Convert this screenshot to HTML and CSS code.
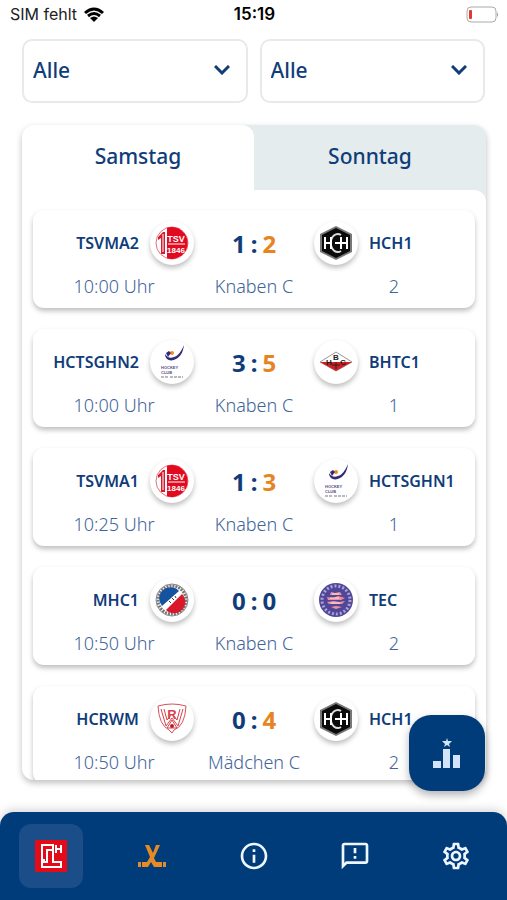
FILE: index.html
```html
<!DOCTYPE html>
<html lang="de">
<head>
    <meta charset="utf-8">
    <meta name="viewport" content="width=device-width, initial-scale=1">
    <title>Spielplan</title>
    <link rel="stylesheet" href="styles.css">
</head>
<body>
    <!-- Club logos, used by the match cards -->
    <svg class="sprite" aria-hidden="true">
        <symbol id="tsv" viewBox="0 0 34 34">
            <circle cx="17" cy="17" r="16" fill="#fff" stroke="#e5707a" stroke-width="1"/>
            <path d="M12 1.700A16 16 0 1 1 12 32.300z" fill="#e20a20"/>
            <path d="M3 11l5-5h2v22H6V12l-3 2z" fill="#d51b2c"/>
            <path d="M8 8v18" stroke="#fff" stroke-width="1"/>
            <text x="21" y="16" class="logo-text" font-size="9" fill="#fff">TSV</text>
            <path d="M13 18h17" stroke="#fff" stroke-width="1"/>
            <text x="21" y="27" class="logo-text" font-size="8" fill="#fff">1846</text>
        </symbol>
        <symbol id="hch" viewBox="0 0 34 34">
            <path d="M17 0l16 8v18l-16 8-16-8V8z" fill="#777"/>
            <path d="M17 2l14 7v16l-14 7-14-7V9z" fill="#0b0b0b"/>
            <path d="M22 9a7 9 0 1 0 0 16" fill="none" stroke="#ddd" stroke-width="2"/>
            <path d="M6 11v12M12 11v12M6 17h6M22 11v12M28 11v12M16 17h12" fill="none" stroke="#fff" stroke-width="2"/>
        </symbol>
        <symbol id="hcl" viewBox="0 0 34 34">
            <path d="M10 9c0 6 6 8 11 5 4-2 7-6 8-14-3 7-6 11-10 12-4 2-7 0-9-3z" fill="#302a78"/>
            <circle cx="17" cy="8" r="2" fill="#f08a24"/>
            <path d="M11 8l3-2 2 2-3 4z" fill="#302a78"/>
            <text x="6" y="24" font-size="4" fill="#55507f" class="logo-line">HOCKEY</text>
            <text x="6" y="29" font-size="4" fill="#55507f" class="logo-line">CLUB</text>
            <path d="M6 32h7M15 32h13" stroke="#77738f" stroke-width="1" stroke-dasharray="3 1"/>
        </symbol>
        <symbol id="bhtc" viewBox="0 0 34 34">
            <path d="M1 17l16-10 16 10-16 9z" fill="#fff" stroke="#999" stroke-width="1"/>
            <path d="M1 17h32l-16 9z" fill="#cf1f24"/>
            <path d="M13 20h8M17 17v7" stroke="#222" stroke-width="1"/>
            <text x="17" y="15" class="logo-text" font-size="8" fill="#222">B</text>
            <text x="10" y="20" class="logo-text" font-size="8" fill="#222">H</text>
            <text x="24" y="20" class="logo-text" font-size="8" fill="#222">C</text>
        </symbol>
        <symbol id="mhc" viewBox="0 0 34 34">
            <circle cx="17" cy="17" r="16" fill="#fff" stroke="#888" stroke-width="1"/>
            <circle cx="17" cy="17" r="14" fill="none" stroke="#777" stroke-width="3" stroke-dasharray="2 1"/>
            <path d="M7 23A11 11 0 0 1 24 8z" fill="#15539f"/>
            <path d="M27 11A11 11 0 0 1 11 27z" fill="#d8192c"/>
            <path d="M9 24L25 10" stroke="#fff" stroke-width="3"/>
            <path d="M14 18l2 2M17 15l2 2M20 13l1 2" stroke="#333" stroke-width="1"/>
        </symbol>
        <symbol id="tec" viewBox="0 0 34 34">
            <circle cx="17" cy="17" r="17" fill="#50469a"/>
            <circle cx="17" cy="17" r="14" fill="none" stroke="#aaa4d2" stroke-width="3" stroke-dasharray="2 2"/>
            <circle cx="17" cy="17" r="11" fill="#50469a"/>
            <path d="M12 9l4 1 5-1 2 3H11zM8 14l6 1 5-2 7 2-4 2H9zM8 19l7-1 5 1 6-1-3 3H10zM12 24l5-1 6 1-6 2z" fill="#ef8f9a"/>
            <path d="M13 11h7M11 15h9M12 20h9" stroke="#fbe6e4" stroke-width="1"/>
        </symbol>
        <symbol id="hcr" viewBox="0 0 34 34">
            <path d="M3 4q14-4 28 0-1 20-12 24l-2 3-3-3Q4 23 3 4z" fill="#fff" stroke="#d9505a" stroke-width="1"/>
            <path d="M6 7l5 17 6-8 6 8 5-17M9 7l3 11 5-6 5 6 3-11" fill="none" stroke="#d9404b" stroke-width="1"/>
            <text x="17" y="17" class="logo-text" font-size="13" fill="#d9404b">R</text>
            <path d="M12 26l5-8 5 8z" fill="#fff" stroke="#d9404b" stroke-width="1"/>
            <circle cx="17" cy="24" r="2" fill="#b3202c"/>
        </symbol>
    </svg>

    <header class="statusbar">
        <div class="carrier">
            <span>SIM fehlt</span>
            <svg width="20" height="15" viewBox="0 0 20 15" fill="none" stroke="#000" stroke-width="3" aria-hidden="true">
                <path d="M1 6q9-8 18 0M4 9q6-5 12 0"/>
                <path d="M6 11q4-3 8 0l-4 4z" fill="#000" stroke="none"/>
            </svg>
        </div>
        <span class="clock">15:19</span>
        <svg class="battery" width="33" height="17" viewBox="0 0 33 17" aria-hidden="true">
            <rect x="1" y="1" width="29" height="15" rx="4" fill="#fff" stroke="#aaa" stroke-width="1"/>
            <rect x="3" y="4" width="3" height="9" rx="1" fill="#e5392f"/>
            <path d="M31 6v5q2-2 0-5z" fill="#999"/>
        </svg>
    </header>

    <form class="filters">
        <div class="filter">
            <select aria-label="Altersklasse">
                <option>Alle</option>
            </select>
            <svg class="chevron" width="16" height="10" viewBox="0 0 16 10" aria-hidden="true"><path d="M1 1l7 7 7-7"/></svg>
        </div>
        <div class="filter">
            <select aria-label="Mannschaft">
                <option>Alle</option>
            </select>
            <svg class="chevron" width="16" height="10" viewBox="0 0 16 10" aria-hidden="true"><path d="M1 1l7 7 7-7"/></svg>
        </div>
    </form>

    <main class="panel">
        <div class="tabs" role="tablist">
            <button type="button" class="tab active" role="tab" aria-selected="true">Samstag</button>
            <button type="button" class="tab" role="tab" aria-selected="false">Sonntag</button>
        </div>
        <div class="matches">
            <article class="match">
                <div class="teams">
                    <div class="team home">TSVMA2 <span class="logo"><svg><use href="#tsv"/></svg></span></div>
                    <div class="score"><span>1</span><span>:</span><span class="winner">2</span></div>
                    <div class="team"><span class="logo"><svg><use href="#hch"/></svg></span> HCH1</div>
                </div>
                <div class="info"><span>10:00 Uhr</span><span>Knaben C</span><span>2</span></div>
            </article>
            <article class="match">
                <div class="teams">
                    <div class="team home">HCTSGHN2 <span class="logo"><svg><use href="#hcl"/></svg></span></div>
                    <div class="score"><span>3</span><span>:</span><span class="winner">5</span></div>
                    <div class="team"><span class="logo"><svg><use href="#bhtc"/></svg></span> BHTC1</div>
                </div>
                <div class="info"><span>10:00 Uhr</span><span>Knaben C</span><span>1</span></div>
            </article>
            <article class="match">
                <div class="teams">
                    <div class="team home">TSVMA1 <span class="logo"><svg><use href="#tsv"/></svg></span></div>
                    <div class="score"><span>1</span><span>:</span><span class="winner">3</span></div>
                    <div class="team"><span class="logo"><svg><use href="#hcl"/></svg></span> HCTSGHN1</div>
                </div>
                <div class="info"><span>10:25 Uhr</span><span>Knaben C</span><span>1</span></div>
            </article>
            <article class="match">
                <div class="teams">
                    <div class="team home">MHC1 <span class="logo"><svg><use href="#mhc"/></svg></span></div>
                    <div class="score"><span>0</span><span>:</span><span>0</span></div>
                    <div class="team"><span class="logo"><svg><use href="#tec"/></svg></span> TEC</div>
                </div>
                <div class="info"><span>10:50 Uhr</span><span>Knaben C</span><span>2</span></div>
            </article>
            <article class="match">
                <div class="teams">
                    <div class="team home">HCRWM <span class="logo"><svg><use href="#hcr"/></svg></span></div>
                    <div class="score"><span>0</span><span>:</span><span class="winner">4</span></div>
                    <div class="team"><span class="logo"><svg><use href="#hch"/></svg></span> HCH1</div>
                </div>
                <div class="info"><span>10:50 Uhr</span><span>Mädchen C</span><span>2</span></div>
            </article>
        </div>
    </main>

    <button type="button" class="fab" aria-label="Tabelle">
        <svg width="28" height="32" viewBox="0 0 28 32" fill="#d3e4f8" aria-hidden="true">
            <path d="M0 24h8v7H0zM10 12h7v19h-7zM20 18h7v13h-7z"/>
            <path d="M14 1l1 3h4l-3 3 1 3-3-2-3 2 1-3-3-3h4z"/>
        </svg>
    </button>

    <nav class="navbar">
        <a href="#spiele" class="nav-item active" aria-label="Turnier">
            <span class="nav-icon">
                <svg width="32" height="32" viewBox="0 0 32 32" aria-hidden="true">
                    <rect width="32" height="32" fill="#e30b17"/>
                    <g fill="none" stroke="#fff" stroke-width="2">
                        <path d="M10 20H7V5h11v5h-6v12H7v5h19v-5h-8V10"/>
                        <path d="M21 5v8M26 5v8M21 9h5"/>
                    </g>
                </svg>
            </span>
        </a>
        <a href="#hockey" class="nav-item" aria-label="Hockey">
            <span class="nav-icon">
                <svg width="28" height="24" viewBox="0 0 28 24" fill="#e58a25" aria-hidden="true">
                    <path d="M7 1h4l4 8 3-8h4l-6 13 2 4h6v5h-8l-3-5-3 5H4v-5h5l3-5z"/>
                    <path d="M0 18h3v5H0zM25 18h3v5h-3z"/>
                </svg>
            </span>
        </a>
        <a href="#info" class="nav-item" aria-label="Info">
            <span class="nav-icon">
                <svg width="32" height="32" viewBox="0 0 24 24" fill="#eef6ff" aria-hidden="true">
                    <path d="M11 7h2v2h-2zm0 4h2v6h-2zm1-9C6.480 2 2 6.480 2 12s4.480 10 10 10 10-4.480 10-10S17.520 2 12 2zm0 18c-4.410 0-8-3.590-8-8s3.590-8 8-8 8 3.590 8 8-3.590 8-8 8z"/>
                </svg>
            </span>
        </a>
        <a href="#feedback" class="nav-item" aria-label="Feedback">
            <span class="nav-icon">
                <svg width="32" height="32" viewBox="0 0 24 24" fill="#eef6ff" aria-hidden="true">
                    <path d="M20 2H4c-1.100 0-2 .9-2 2v18l4-4h14c1.100 0 2-.9 2-2V4c0-1.100-.9-2-2-2zm0 14H5.170L4 17.170V4h16v12zM11 12h2v2h-2zm0-6h2v4h-2z"/>
                </svg>
            </span>
        </a>
        <a href="#settings" class="nav-item" aria-label="Einstellungen">
            <span class="nav-icon">
                <svg width="32" height="32" viewBox="0 0 24 24" fill="#eef6ff" aria-hidden="true">
                    <path d="M19.430 12.980c.04-.32.07-.64.07-.98 0-.34-.03-.66-.07-.98l2.110-1.650c.19-.15.24-.42.12-.64l-2-3.460c-.09-.16-.26-.25-.44-.25-.06 0-.12.01-.17.03l-2.490 1c-.52-.4-1.080-.73-1.690-.98l-.38-2.650C14.460 2.180 14.250 2 14 2h-4c-.25 0-.46.18-.49.42l-.38 2.650c-.61.25-1.170.59-1.690.98l-2.490-1c-.06-.02-.12-.03-.18-.03-.17 0-.34.09-.43.25l-2 3.460c-.13.22-.07.49.12.64l2.110 1.650c-.04.32-.07.65-.07.98 0 .33.03.66.07.98l-2.110 1.650c-.19.15-.24.42-.12.64l2 3.460c.09.16.26.25.44.25.06 0 .12-.01.17-.03l2.490-1c.52.4 1.080.73 1.690.98l.38 2.650c.03.24.24.42.49.42h4c.25 0 .46-.18.49-.42l.38-2.650c.61-.25 1.170-.59 1.690-.98l2.490 1c.06.02.12.03.18.03.17 0 .34-.09.43-.25l2-3.460c.12-.22.07-.49-.12-.64l-2.110-1.650zm-1.980-1.710c.04.31.05.52.05.73 0 .21-.02.43-.05.73l-.14 1.130.89.7 1.080.84-.7 1.210-1.270-.51-1.040-.42-.9.68c-.43.32-.84.56-1.250.73l-1.060.43-.16 1.130-.2 1.350h-1.400l-.19-1.350-.16-1.130-1.060-.43c-.43-.18-.83-.41-1.230-.71l-.91-.7-1.060.43-1.270.51-.7-1.210 1.080-.84.89-.7-.14-1.130c-.03-.31-.05-.54-.05-.74s.02-.43.05-.73l.14-1.130-.89-.7-1.080-.84.7-1.210 1.270.51 1.040.42.9-.68c.43-.32.84-.56 1.250-.73l1.060-.43.16-1.130.2-1.350h1.390l.19 1.350.16 1.130 1.060.43c.43.18.83.41 1.230.71l.91.7 1.060-.43 1.270-.51.7 1.210-1.070.85-.89.7.14 1.130zM12 8c-2.210 0-4 1.790-4 4s1.790 4 4 4 4-1.790 4-4-1.790-4-4-4zm0 6c-1.100 0-2-.9-2-2s.9-2 2-2 2 .9 2 2-.9 2-2 2z"/>
                </svg>
            </span>
        </a>
    </nav>
</body>
</html>
```

FILE: styles.css
```css
* {
    box-sizing: border-box;
}
body {
    margin: 0;
    height: 100vh;
    display: flex;
    flex-direction: column;
    overflow: hidden;
    background-color: #fff;
    color: #103d79;
    font-family: "Noto Sans", "Open Sans", sans-serif;
}
button, select {
    font-family: inherit;
    color: inherit;
}
.sprite {
    display: none;
}
.logo-text {
    font-family: "Liberation Sans", sans-serif;
    font-weight: bold;
    text-anchor: middle;
}
.logo-line {
    font-family: "Liberation Sans", sans-serif;
    font-weight: bold;
}

/* Status bar */
.statusbar {
    display: grid;
    grid-template-columns: 1fr auto 1fr;
    align-items: center;
    height: 28px;
    padding: 0 8px 0 10px;
    color: #222;
    font-family: Inter, sans-serif;
    font-size: 16px;
}
.carrier {
    display: flex;
    align-items: center;
    gap: 7px;
}
.clock {
    color: #000;
    font-size: 17px;
    font-weight: 600;
}
.battery {
    justify-self: end;
}

/* Filters */
.filters {
    display: flex;
    gap: 12px;
    margin: 11px 22px 22px;
}
.filter {
    position: relative;
    flex: 1;
}
.filter select {
    width: 100%;
    height: 64px;
    padding: 0 40px 2px 9px;
    border: 2px solid #e6eaec;
    border-radius: 10px;
    background-color: #fff;
    font-size: 21px;
    font-weight: 500;
    appearance: none;
}
.chevron {
    position: absolute;
    top: 26px;
    right: 18px;
    fill: none;
    stroke: #103d79;
    stroke-width: 3;
    pointer-events: none;
}

/* Match list */
.panel {
    flex: 1;
    min-height: 0;
    display: flex;
    flex-direction: column;
    margin: 0 21px 32px 22px;
    overflow: hidden;
    border-radius: 12px;
    background-color: #e4ecee;
    box-shadow: 0 3px 6px rgba(0, 0, 0, 0.25);
}
.tabs {
    display: flex;
}
.tab {
    flex: 1;
    height: 65px;
    padding-bottom: 4px;
    border: none;
    background: none;
    font-size: 21px;
    font-weight: 500;
}
.tab.active {
    background-color: #fff;
    border-radius: 0 12px 0 0;
}
.matches {
    flex: 1;
    min-height: 0;
    display: flex;
    flex-direction: column;
    gap: 21px;
    padding: 20px 11px;
    overflow: hidden;
    border-radius: 0 12px 0 0;
    background-color: #fff;
}
.match {
    flex: none;
    padding: 9px 11px 5px;
    border-radius: 11px;
    background-color: #fff;
    box-shadow: 0 3px 5px rgba(0, 0, 0, 0.25);
}
.teams {
    display: grid;
    grid-template-columns: 1fr 120px 1fr;
    align-items: center;
    height: 48px;
    margin-bottom: 3px;
}
.team {
    display: flex;
    align-items: center;
    gap: 11px;
    font-size: 16px;
    font-weight: 600;
}
.home {
    justify-content: flex-end;
}
.logo {
    display: flex;
    align-items: center;
    justify-content: center;
    width: 44px;
    height: 44px;
    border-radius: 50%;
    background-color: #fff;
    box-shadow: 0 3px 5px rgba(0, 0, 0, 0.25);
}
.logo svg {
    width: 34px;
    height: 34px;
}
.score {
    display: flex;
    justify-content: center;
    gap: 5px;
    font-size: 24px;
    font-weight: bold;
}
.winner {
    color: #e8841f;
}
.info {
    display: grid;
    grid-template-columns: repeat(3, 1fr);
    height: 33px;
    line-height: 33px;
    color: #41649a;
    font-size: 18px;
    font-weight: 300;
    text-align: center;
}

/* Standings button */
.fab {
    position: fixed;
    right: 22px;
    bottom: 109px;
    display: flex;
    align-items: center;
    justify-content: center;
    width: 76px;
    height: 76px;
    border: none;
    border-radius: 22px;
    background-color: #003b7a;
    box-shadow: 0 4px 8px rgba(0, 0, 0, 0.3);
}

/* Bottom navigation */
.navbar {
    display: flex;
    height: 88px;
    padding: 12px 0;
    border-radius: 14px 14px 0 0;
    background-color: #003b7a;
    box-shadow: 0 -3px 8px rgba(0, 0, 0, 0.15);
}
.nav-item {
    flex: 1;
    display: flex;
    justify-content: center;
}
.nav-icon {
    display: flex;
    align-items: center;
    justify-content: center;
    width: 64px;
    height: 64px;
    border-radius: 12px;
}
.nav-item.active .nav-icon {
    background-color: #1b4d88;
}
```
